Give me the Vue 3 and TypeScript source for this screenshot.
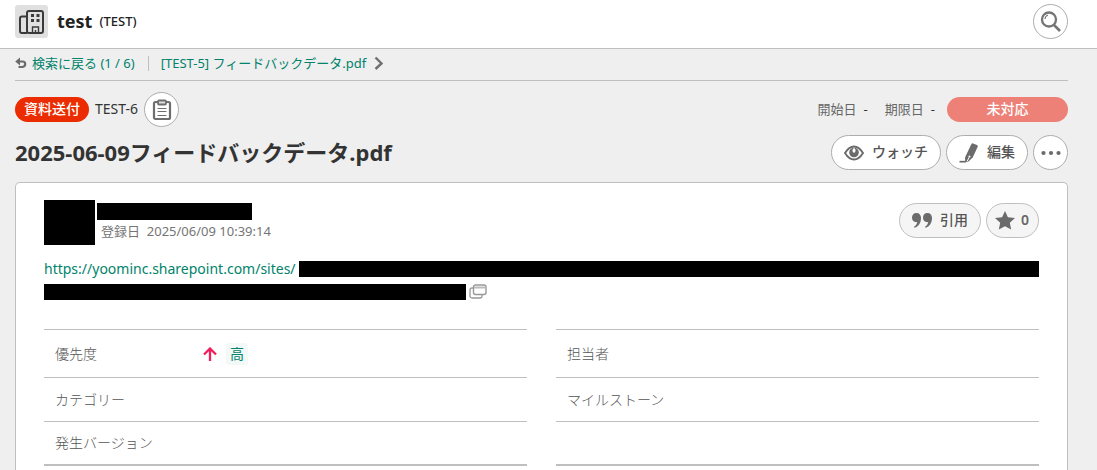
<script setup lang="ts">
interface Field {
  label: string
  value?: string
}

const leftFields: Field[] = [
  { label: '優先度', value: '高' },
  { label: 'カテゴリー' },
  { label: '発生バージョン' },
]
const rightFields: Field[] = [
  { label: '担当者' },
  { label: 'マイルストーン' },
  { label: '' },
]
const columns: Field[][] = [leftFields, rightFields]
</script>

<template>
  <div class="page">
    <header class="topbar">
      <span class="project-icon">
        <svg width="33" height="33" viewBox="0 0 33 33" fill="none" stroke="#3a3a3a" stroke-width="2">
          <path d="M12 11.500H7Q5 11.500 5 13.500V26Q5 28 7 28H12" />
          <rect x="12" y="6" width="16" height="22" rx="2" />
          <path d="M17.500 28V22H23.500V28M20.500 25V28" stroke-width="1.400" />
          <path d="M16 10.500H19M16 15.500H19M21.500 10.500H24.500M21.500 15.500H24.500" stroke-width="3" />
        </svg>
      </span>
      <h1 class="project-name">test</h1>
      <span class="project-key">(TEST)</span>
      <button class="round-btn search" type="button" aria-label="検索">
        <svg width="34" height="34" viewBox="0 0 34 34" fill="none" stroke="#757575">
          <circle cx="15" cy="15.500" r="7" stroke-width="2.300" />
          <path d="M20 21L26 27" stroke-width="2.600" />
          <path d="M11 15Q11.200 12 14 11.300" stroke-width="1.100" />
        </svg>
      </button>
    </header>

    <main class="content">
      <nav class="crumbs">
        <a class="back" href="#">
          <svg width="12" height="12" viewBox="0 0 12 12">
            <path d="M3.500 4.500H7.500Q10.200 4.500 10.200 7T7.500 10H3.500" fill="none" stroke="#6b6b6b" stroke-width="2.200" />
            <path d="M5 0.500V8.500L0.200 4.500Z" fill="#6b6b6b" />
          </svg>
          <span>検索に戻る (1 / 6)</span>
        </a>
        <span class="divider"></span>
        <a class="next" href="#">
          <span>[TEST-5] フィードバックデータ.pdf</span>
          <svg width="10" height="14" viewBox="0 0 10 14">
            <path d="M1.500 1.500L7.500 7.500L1.500 13" fill="none" stroke="#707070" stroke-width="2.400" />
          </svg>
        </a>
      </nav>

      <div class="meta">
        <span class="type">資料送付</span>
        <span class="key">TEST-6</span>
        <button class="round-btn" type="button" aria-label="コピー">
          <svg width="20" height="22" viewBox="0 0 20 22" fill="none" stroke="#6e6e6e">
            <rect x="2" y="3" width="16" height="17" rx="1.500" stroke-width="2.200" />
            <path d="M6 2.500Q6 1.500 7 1.500H13Q14 1.500 14 2.500V4.500Q14 5.500 13 5.500H7Q6 5.500 6 4.500Z" fill="#ddd" stroke-width="1.800" />
            <path d="M5.500 9.500H14.500M5.500 12.500H14.500M5.500 16.500H14.500" stroke-width="1" />
          </svg>
        </button>
        <div class="dates">
          <span>開始日<b>-</b></span>
          <span>期限日<b>-</b></span>
        </div>
        <span class="status">未対応</span>
      </div>

      <div class="title-row">
        <h2 class="title">2025-06-09フィードバックデータ.pdf</h2>
        <div class="actions">
          <button class="pill" type="button">
            <svg width="20" height="16" viewBox="0 0 20 16">
              <path d="M1 8Q5 1.500 10 1.500T19 8Q15 14.500 10 14.500T1 8Z" fill="#fff" stroke="#6b6b6b" stroke-width="1.900" />
              <circle cx="10" cy="7.500" r="4.800" fill="#6b6b6b" />
              <ellipse cx="10" cy="5.500" rx="1.500" ry="2.200" fill="#fff" />
            </svg>
            <span>ウォッチ</span>
          </button>
          <button class="pill" type="button">
            <svg width="20" height="20" viewBox="0 0 20 20" fill="#6b6b6b">
              <path d="M12.300 1.200Q13 0 14 0.400L18 2Q19.200 2.600 18.700 3.800L13.700 14.400L9.500 18.600L6.200 19L6 14.500Z" />
              <path d="M8.300 18L10.200 14.200" stroke="#fff" stroke-width="1" />
              <circle cx="10.500" cy="13.500" r="1" fill="#fff" />
              <path d="M0.500 18.700H7" fill="none" stroke="#6b6b6b" stroke-width="1.700" />
            </svg>
            <span>編集</span>
          </button>
          <button class="round-btn" type="button" aria-label="その他">
            <svg width="20" height="6" viewBox="0 0 20 6" fill="#6b6b6b">
              <circle cx="2.500" cy="3" r="2.100" /><circle cx="10" cy="3" r="2.100" /><circle cx="17.500" cy="3" r="2.100" />
            </svg>
          </button>
        </div>
      </div>

      <section class="card">
        <div class="author">
          <span class="avatar"></span>
          <div class="who">
            <span class="name"></span>
            <span class="date">登録日&nbsp; 2025/06/09 10:39:14</span>
          </div>
          <div class="actions">
            <button class="pill soft" type="button">
              <svg width="20" height="15" viewBox="0 0 20 15" fill="#6b6b6b">
                <path d="M4.400 0C7.500 0 9 2 9 5C9 10 6.500 13.500 2.500 14.800L2 13.700C4.200 12.500 5 11 5.200 9.100C2 9.500 0 7.500 0 4.700C0 2 1.800 0 4.400 0Z" />
                <path transform="translate(11 0)" d="M4.400 0C7.500 0 9 2 9 5C9 10 6.500 13.500 2.500 14.800L2 13.700C4.200 12.500 5 11 5.200 9.100C2 9.500 0 7.500 0 4.700C0 2 1.800 0 4.400 0Z" />
              </svg>
              <span>引用</span>
            </button>
            <button class="pill soft star" type="button">
              <svg width="20" height="19" viewBox="0 0 20 19" fill="#6b6b6b">
                <path d="M10 0L12.900 6.200L20 7.100L14.800 11.700L16.200 18.600L10 15.300L3.800 18.600L5.200 11.700L0 7.100L7.100 6.200Z" />
              </svg>
              <span>0</span>
            </button>
          </div>
        </div>

        <div class="body">
          <div class="line">
            <a class="url" href="#">https://yoominc.sharepoint.com/sites/</a>
            <span class="mask grow"></span>
          </div>
          <div class="line">
            <span class="mask tail"></span>
            <svg width="18" height="15" viewBox="0 0 18 15" fill="#fff" stroke="#999">
              <rect x="1" y="4" width="12" height="10" rx="2" stroke-width="1.300" />
              <rect x="4.500" y="1" width="12.500" height="9.500" rx="2" stroke-width="1.400" />
              <path d="M5 3.500H16.500" stroke="#bbb" stroke-width="2" />
            </svg>
          </div>
        </div>

        <div class="fields">
          <dl v-for="(column, index) in columns" :key="index">
            <div v-for="(field, row) in column" :key="row" class="field">
              <dt>{{ field.label }}</dt>
              <dd v-if="field.value">
                <svg width="14" height="14" viewBox="0 0 14 14" fill="none" stroke="#f21d5b" stroke-width="2.300">
                  <path d="M7 14V1.500M1 7.500L7 1.500L13 7.500" />
                </svg>
                <span class="priority">{{ field.value }}</span>
              </dd>
            </div>
          </dl>
        </div>
      </section>
    </main>
  </div>
</template>

<style>
body {
  margin: 0;
  background: #efefef;
}
</style>

<style scoped>
.page,
.page * {
  box-sizing: border-box;
}
.page {
  display: flex;
  flex-direction: column;
  min-height: 100vh;
  font-family: "Noto Sans", "Noto Sans CJK JP", sans-serif;
  font-size: 13px;
  line-height: 20px;
  color: #333;
}
svg {
  display: block;
  flex: none;
}
a {
  color: #00836b;
  text-decoration: none;
}
button {
  font: inherit;
  cursor: pointer;
}
.topbar {
  display: flex;
  align-items: center;
  height: 49px;
  padding: 0 29px 6px 15px;
  background: #fff;
  border-bottom: 1px solid #bfbfbf;
}
.project-icon {
  background: #e0e0e0;
  border-radius: 3px;
}
.project-name {
  margin: 0 7px 0 9px;
  font-size: 18px;
  color: #222;
}
.project-key {
  font-weight: 500;
  color: #222;
}
.round-btn {
  display: flex;
  align-items: center;
  justify-content: center;
  flex: none;
  width: 35px;
  height: 35px;
  padding: 0;
  background: #fff;
  border: 1px solid #adadad;
  border-radius: 50%;
}
.search {
  margin-left: auto;
}
.content {
  display: flex;
  flex: 1;
  flex-direction: column;
  padding: 0 29px 0 15px;
}
.crumbs {
  display: flex;
  align-items: center;
  height: 32px;
  padding-bottom: 3px;
  border-bottom: 1px solid #bfbfbf;
}
.back,
.next {
  display: flex;
  align-items: center;
  gap: 5px;
}
.next {
  gap: 8px;
}
.divider {
  width: 1px;
  height: 15px;
  margin: 0 12px 0 13px;
  background: #bfbfbf;
}
.meta {
  display: flex;
  align-items: center;
  gap: 6px;
  margin-top: 11px;
}
.type,
.status {
  display: block;
  height: 25px;
  border-radius: 13px;
  font-size: 14px;
  font-weight: 500;
  line-height: 24px;
  color: #fff;
  text-align: center;
}
.type {
  padding: 0 9px;
  background: #ea2c00;
}
.key {
  padding-bottom: 2px;
  font-size: 14px;
}
.dates {
  display: flex;
  gap: 16px;
  margin-left: auto;
  margin-right: 5px;
  padding-bottom: 2px;
  color: #666;
}
.dates b {
  margin: 0 1px 0 7px;
  font-weight: 400;
  color: #333;
}
.status {
  width: 121px;
  background: #ed8077;
}
.title-row {
  display: flex;
  align-items: center;
  justify-content: space-between;
  margin-top: 8px;
}
.title {
  margin: 0;
  padding-bottom: 2px;
  font-size: 22px;
  line-height: 30px;
}
.actions {
  display: flex;
  gap: 5px;
}
.pill {
  display: flex;
  align-items: center;
  gap: 8px;
  height: 35px;
  padding: 0 12px;
  background: #fff;
  border: 1px solid #adadad;
  border-radius: 18px;
  font-size: 14px;
  font-weight: 500;
  color: #555;
}
.pill span {
  padding-bottom: 2px;
}
.soft {
  background: #f5f5f5;
  border-color: #bfbfbf;
}
.star {
  gap: 6px;
  padding: 0 9px 0 8px;
  font-weight: 600;
  color: #666;
}
.card {
  flex: 1;
  margin-top: 12px;
  padding: 17px 28px 0;
  background: #fff;
  border: 1px solid #bfbfbf;
  border-bottom: 0;
  border-radius: 5px 5px 0 0;
}
.author {
  display: flex;
  align-items: flex-start;
  gap: 2px;
}
.author .actions {
  margin: 3px 0 0 auto;
}
.avatar {
  width: 51px;
  height: 45px;
  background: #000;
}
.name {
  display: block;
  width: 155px;
  height: 17px;
  margin-top: 3px;
  background: #000;
}
.date {
  display: block;
  margin: 1px 0 0 4px;
  color: #757575;
}
.body {
  margin-top: 12px;
  font-size: 14px;
}
.line {
  display: flex;
  align-items: center;
  height: 23px;
}
.url {
  min-width: 255px;
}
.mask {
  height: 16px;
  background: #000;
}
.grow {
  flex: 1;
}
.tail {
  width: 422px;
  margin-right: 3px;
}
.fields {
  display: grid;
  grid-template-columns: 1fr 1fr;
  gap: 29px;
  margin-top: 26px;
  font-size: 14px;
}
dl {
  margin: 0;
  border-top: 1px solid #bfbfbf;
}
.field {
  display: flex;
  align-items: center;
  height: 44px;
  padding: 0 11px;
  border-bottom: 1px solid #bfbfbf;
}
.field:first-child {
  height: 48px;
}
.field:last-child {
  border-bottom-width: 2px;
}
dt {
  width: 148px;
  font-weight: 300;
  color: #555;
}
dd {
  display: flex;
  align-items: center;
  gap: 9px;
  margin: 0;
}
.priority {
  padding: 1px 4px;
  background: #f2f9f7;
  border-radius: 3px;
  color: #00836b;
}
</style>
